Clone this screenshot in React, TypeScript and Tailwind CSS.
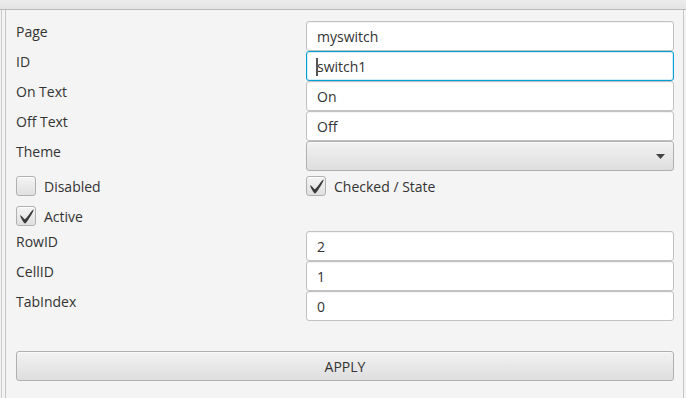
import React from "react"

const rowsTop = [
  { label: "Page", value: "myswitch" },
  { label: "ID", value: "switch1", focused: true },
  { label: "On Text", value: "On" },
  { label: "Off Text", value: "Off" },
]

const rowsBottom = [
  { label: "RowID", value: "2" },
  { label: "CellID", value: "1" },
  { label: "TabIndex", value: "0" },
]

function Label({ text }: { text: string }) {
  return <div className="h-[30px] pt-[2px] text-[14px] leading-[18px] text-[#333]">{text}</div>
}

function Field({ value, focused }: { value: string; focused?: boolean }) {
  return (
    <div
      className={`relative flex h-[30px] items-center rounded-[3px] bg-white px-[10px] text-[14px] text-[#333] ${
        focused
          ? "border border-[#039ed3] shadow-[inset_0_0_0_1px_#d6eefa]"
          : "border border-[#c2c2c2] shadow-[inset_0_1px_1px_rgba(0,0,0,0.05)]"
      }`}
    >
      {focused && <span className="absolute left-[9px] top-[6px] h-[18px] w-[2px] bg-[#555]" />}
      {value}
    </div>
  )
}

function Check({ checked }: { checked?: boolean }) {
  return (
    <div className="flex h-[20px] w-[20px] items-center justify-center rounded-[3px] border border-[#b0b0b0] bg-gradient-to-b from-[#f4f4f4] to-[#e0e0e0] shadow-[inset_0_1px_0_#fff]">
      {checked && (
        <svg width="14" height="15" viewBox="-0.6 -1.2 17 17.6" className="ml-[1px]">
          <path
            d="M-0.25,6.083c0.843-0.758,4.583,4.833,5.75,4.833S14.5-1.5,15.917-0.917c1.292,0.532-8.75,17.083-10.333,17.083S-1.083,6.841-0.25,6.083z"
            fill="#3a3a3a"
          />
        </svg>
      )}
    </div>
  )
}

function CheckRow({ text, checked }: { text: string; checked?: boolean }) {
  return (
    <div className="flex h-[30px] items-center gap-2 text-[14px] text-[#333]">
      <Check checked={checked} />
      <span>{text}</span>
    </div>
  )
}

export default function App() {
  return (
    <div className="flex h-[398px] w-[686px] flex-col overflow-hidden bg-[#f4f4f4] font-['Open_Sans',sans-serif]">
      <div className="h-[10px] shrink-0 border-b border-[#b9b9b9] bg-gradient-to-b from-[#ececec] to-[#e4e4e4]" />
      <div className="ml-[1px] flex flex-1 border-l border-[#cacaca]">
        <div className="ml-[3px] mr-[2px] flex flex-1 flex-col border-l border-r border-[#c6c6c6] pl-[10px] pr-[9px] pt-[11px]">
          <div className="grid grid-cols-[290px_368px]">
            {rowsTop.map((r) => (
              <React.Fragment key={r.label}>
                <Label text={r.label} />
                <Field value={r.value} focused={r.focused} />
              </React.Fragment>
            ))}
            <Label text="Theme" />
            <div className="flex h-[30px] items-center justify-end rounded-[3px] border border-[#b0b0b0] bg-gradient-to-b from-[#f2f2f2] to-[#dedede] pr-[8px] shadow-[inset_0_1px_0_#fafafa]">
              <svg width="9" height="5" viewBox="0 0 9 5">
                <path d="M0 0H9L4.5 5Z" fill="#444" />
              </svg>
            </div>
            <CheckRow text="Disabled" />
            <CheckRow text="Checked / State" checked />
            <CheckRow text="Active" checked />
            <div />
            {rowsBottom.map((r) => (
              <React.Fragment key={r.label}>
                <Label text={r.label} />
                <Field value={r.value} />
              </React.Fragment>
            ))}
          </div>
          <button className="mt-[30px] h-[30px] w-[658px] rounded-[3px] border border-[#b0b0b0] bg-gradient-to-b from-[#f2f2f2] to-[#dedede] text-[14px] text-[#333] shadow-[inset_0_1px_0_#fafafa]">
            APPLY
          </button>
        </div>
      </div>
    </div>
  )
}
